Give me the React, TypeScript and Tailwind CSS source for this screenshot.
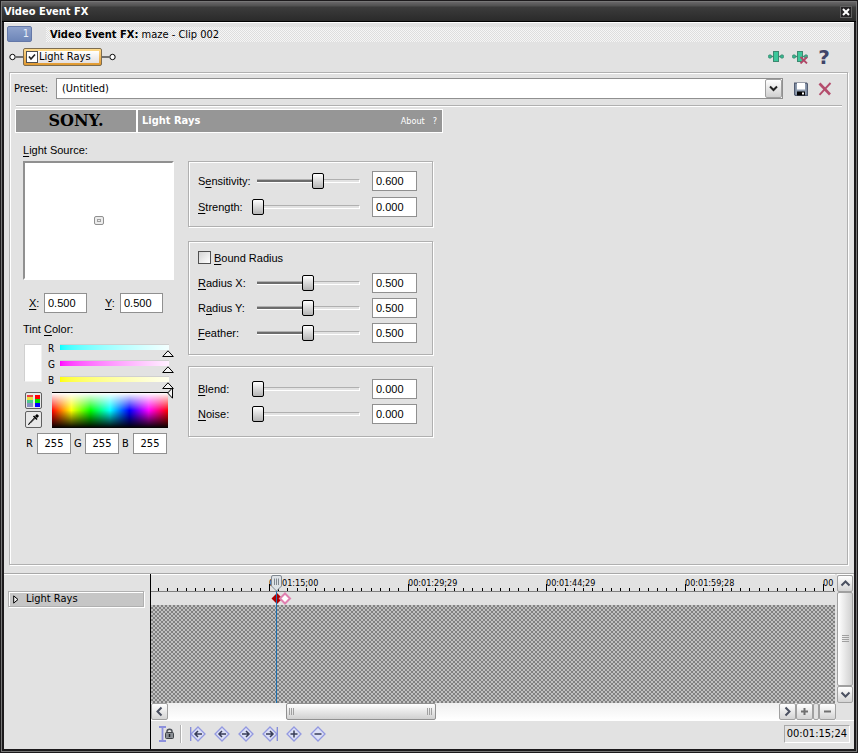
import React, { useState } from "react";

const etched =
  "border border-[#b0b0b0] shadow-[inset_1px_1px_0_#fff,1px_1px_0_#fff]";
const field =
  "h-5 border border-[#909090] bg-white px-[3px] text-black outline-none";
const arial =
  "font-['Liberation_Sans',Arial,sans-serif] text-[11px] leading-4";
const scrollButton =
  "flex size-[17px] shrink-0 items-center justify-center rounded-[2px] border border-[#a0a0a0] bg-linear-to-b from-white to-[#d4d4d4] text-[#4a5060]";

function Key({ text }: { text: string }) {
  const [before, key, after] = text.split("_");
  return (
    <>
      {before}
      <span className="underline underline-offset-2">{key}</span>
      {after}
    </>
  );
}

function Chevron({ d }: { d: string }) {
  return (
    <svg width="11" height="11" viewBox="0 0 11 11" fill="none" stroke="currentColor" strokeWidth="2">
      <path d={d} />
    </svg>
  );
}

function SliderRow({ id, label, initial }: { id: string; label: string; initial: number }) {
  const [value, setValue] = useState(initial);
  return (
    <div className="flex h-5 items-center">
      <label htmlFor={id} className="w-[54px] shrink-0 whitespace-nowrap">
        <Key text={label} />
      </label>
      <div className="grid w-28 items-center">
        <div className="col-start-1 row-start-1 mr-1 ml-[5px] h-1 border-t border-r border-b border-t-[#b0b0b0] border-r-white border-b-white bg-[#e2e2e2]">
          <div className="h-[2px] bg-[#6c6c6c]" style={{ width: `${value * 100}%` }} />
        </div>
        <input
          id={id}
          type="range"
          min={0}
          max={1}
          step={0.001}
          value={value}
          onChange={(e) => setValue(Number(e.target.value))}
          className="col-start-1 row-start-1 h-4 w-28 appearance-none bg-transparent [&::-webkit-slider-thumb]:h-4 [&::-webkit-slider-thumb]:w-3 [&::-webkit-slider-thumb]:appearance-none [&::-webkit-slider-thumb]:rounded-[2px] [&::-webkit-slider-thumb]:border [&::-webkit-slider-thumb]:border-black [&::-webkit-slider-thumb]:bg-linear-to-b [&::-webkit-slider-thumb]:from-white [&::-webkit-slider-thumb]:to-[#b4b4b4]"
        />
      </div>
      <input
        aria-label={label.split("_").join("")}
        value={value.toFixed(3)}
        onChange={(e) => setValue(Number(e.target.value) || 0)}
        className={`${field} ml-2 w-[45px]`}
      />
    </div>
  );
}

const ramps = [
  { name: "R", ramp: "bg-linear-to-r from-[#00ffff] to-[#f4ffff]" },
  { name: "G", ramp: "bg-linear-to-r from-[#ff00ff] to-[#fff0ff]" },
  { name: "B", ramp: "bg-linear-to-r from-[#ffff00] to-[#fffff0]" },
];

function TintRamp({ name, ramp }: { name: string; ramp: string }) {
  return (
    <div className="flex h-4 items-start">
      <label htmlFor={`tint-${name}`} className="w-3 text-[10px] leading-[10px]">
        {name}
      </label>
      <div className="relative">
        <input
          id={`tint-${name}`}
          type="range"
          min={0}
          max={255}
          defaultValue={255}
          className={`block h-[6px] w-[109px] appearance-none border-t border-[#d0d0d0] ${ramp} [&::-webkit-slider-thumb]:size-1 [&::-webkit-slider-thumb]:appearance-none`}
        />
        <svg className="absolute top-[6px] -right-[5px]" width="12" height="7" viewBox="0 0 12 7">
          <path d="M0.7 6.5L6 0.8L11.3 6.5Z" fill="#f4f4f4" stroke="#000" />
        </svg>
      </div>
    </div>
  );
}

function PlugIcon({ removed }: { removed?: boolean }) {
  return (
    <svg width="16" height="14" viewBox="0 0 16 14">
      <path d="M2 6.5H14" stroke="#4a8a78" strokeWidth="1.4" />
      <circle cx="2" cy="6.5" r="1.7" fill="#35b890" stroke="#3d8870" strokeWidth=".8" />
      <circle cx="14" cy="6.5" r="1.7" fill="#35b890" stroke="#3d8870" strokeWidth=".8" />
      <rect x="5.5" y="1.5" width="5" height="10" fill="#3cc79a" stroke="#3d8870" />
      {removed && <path d="M8.5 7L15 13.5M15 7L8.5 13.5" stroke="#b04868" strokeWidth="1.8" />}
    </svg>
  );
}

const keyframeButtons = [
  { name: "First keyframe", d: "M5 8H12M8 5L5 8L8 11", bar: "M0.7 1V15" },
  { name: "Previous keyframe", d: "M5 8H12M8 5L5 8L8 11" },
  { name: "Next keyframe", d: "M4 8H11M8 5L11 8L8 11" },
  { name: "Last keyframe", d: "M4 8H11M8 5L11 8L8 11", bar: "M15.3 1V15" },
  { name: "Create keyframe", d: "M4.5 8H11.5M8 4.5V11.5" },
  { name: "Delete keyframe", d: "M4.5 8H11.5" },
];

const rulerStart = 118;
const rulerStep = 138.6;
const times = ["00:01:15;00", "00:01:29;29", "00:01:44;29", "00:01:59;28", "00"];

function Ruler() {
  const ticks = Array.from({ length: 87 }, (_, i) => i - 12);
  return (
    <div className="relative h-[17px] overflow-hidden border-b border-[#808080] text-[9px] leading-3">
      <svg className="absolute inset-0" width="100%" height="16">
        {ticks.map((i) => (
          <rect
            key={i}
            x={Math.round(rulerStart + (i * rulerStep) / 15)}
            y={i % 15 === 0 ? 9 : 13}
            width="1"
            height="8"
            fill="#000"
          />
        ))}
      </svg>
      {times.map((t, i) => (
        <span key={t} className="absolute top-[2px]" style={{ left: Math.round(rulerStart + i * rulerStep) }}>
          {t}
        </span>
      ))}
    </div>
  );
}

function Grip() {
  return <span className="h-[7px] w-[6px] bg-[repeating-linear-gradient(90deg,#a0a0a0_0_1px,transparent_1px_2px)]" />;
}

export default function App() {
  return (
    <div className="flex h-screen min-h-[640px] flex-col border border-[#1c1a1c] bg-[#1c1a1c] font-['DejaVu_Sans_Condensed','Noto_Sans',sans-serif] text-[11px] leading-4 text-black">
      <div className="flex min-h-0 flex-1 flex-col border border-[#777]">
        <header className="flex h-5 shrink-0 items-center justify-between bg-[linear-gradient(#686668_0,#505050_4px,#3c3c3c_5px,#2a2a2a_19px,#000_19px)] pr-1 pl-[2px]">
          <h1 className="font-bold text-white">Video Event FX</h1>
          <button aria-label="Close" className="flex size-3 items-center justify-center border border-[#606060] bg-[#242224]">
            <svg width="8" height="8" viewBox="0 0 8 8" stroke="#fff" strokeWidth="2">
              <path d="M1 1L7 7M7 1L1 7" />
            </svg>
          </button>
        </header>

        <div className="mx-[2px] mb-[2px] flex min-h-0 flex-1 flex-col border-t border-white bg-[#e2e2e2]">
          <div className="flex h-[22px] shrink-0 items-center pr-1 pl-[3px]">
            <div className="h-4 w-[25px] rounded-[2px] border border-[#6478a8] bg-linear-to-b from-[#8ea2cc] to-[#6e86b8] pr-[2px] text-right leading-[14px] text-[#e8eef8]">
              1
            </div>
            <div className="ml-[14px] h-[15px] flex-1 bg-[repeating-conic-gradient(#dedede_0_25%,#f6f6f6_0_50%)] bg-[length:2px_2px] pl-1 leading-[15px]">
              <b>Video Event FX:</b> maze - Clip 002
            </div>
          </div>

          <div className="flex h-[27px] shrink-0 items-center pr-[22px] pb-[3px] pl-[5px]">
            <svg width="14" height="8" viewBox="0 0 14 8" fill="#fff" stroke="#000">
              <path d="M7 4H14" />
              <circle cx="3.5" cy="4" r="2.7" />
            </svg>
            <div className="rounded-[2px] border border-[#7c6c50] bg-linear-to-b from-[#ffdc8c] to-[#e0982c] p-[2px]">
              <div className="flex h-3 items-center bg-linear-to-b from-white to-[#e4e0e0] pr-2">
                <span className="grid place-items-center">
                  <input
                    id="plugin"
                    type="checkbox"
                    defaultChecked
                    className="peer col-start-1 row-start-1 size-3 appearance-none border border-[#505050] bg-white"
                  />
                  <svg className="pointer-events-none invisible col-start-1 row-start-1 peer-checked:visible" width="8" height="8" viewBox="0 0 8 8" fill="none" stroke="#222" strokeWidth="1.6">
                    <path d="M1 3.5L3 6L7 1.5" />
                  </svg>
                </span>
                <label htmlFor="plugin" className="pl-px">Light Rays</label>
              </div>
            </div>
            <svg width="14" height="8" viewBox="0 0 14 8" fill="#fff" stroke="#000">
              <path d="M0 4H7" />
              <circle cx="10.5" cy="4" r="2.7" />
            </svg>
            <div className="ml-auto flex items-center gap-2">
              <button aria-label="Plug-in chain"><PlugIcon /></button>
              <button aria-label="Remove plug-in"><PlugIcon removed /></button>
              <button aria-label="Help" className="w-4 font-['DejaVu_Sans',sans-serif] text-[20px] font-bold leading-5 text-[#404468]">?</button>
            </div>
          </div>

          <section className={`mr-[6px] ml-[5px] flex min-h-0 flex-1 flex-col ${etched}`}>
            <div className="mt-[5px] flex shrink-0 items-center pr-[15px] pl-1">
              <label htmlFor="preset" className="w-[42px]">Preset:</label>
              <div className="grid flex-1">
                <select id="preset" className="col-start-1 row-start-1 h-[21px] appearance-none border border-[#909090] bg-white pr-5 pl-[5px] outline-none">
                  <option>(Untitled)</option>
                </select>
                <span className="pointer-events-none col-start-1 row-start-1 mr-px flex h-[19px] w-[17px] items-center justify-center self-center justify-self-end rounded-[2px] border border-[#a0a0a0] bg-linear-to-b from-white to-[#d0d0d0] text-[#222]">
                  <Chevron d="M2 3.5L5.5 7L9 3.5" />
                </span>
              </div>
              <button aria-label="Save preset" className="ml-[11px]">
                <svg width="14" height="14" viewBox="0 0 14 14">
                  <path d="M.6 1.2H12.6L13.4 2V13.4H1.4L.6 12.6Z" fill="#8e9cb0" stroke="#505a70" strokeWidth="1.2" />
                  <rect x="3" y="1" width="8" height="6.5" fill="#fff" />
                  <rect x="3" y="9.5" width="8" height="4" fill="#000" />
                  <rect x="8" y="10.5" width="2" height="2" fill="#fff" />
                </svg>
              </button>
              <button aria-label="Delete preset" className="ml-[10px]">
                <svg width="14" height="14" viewBox="0 0 14 14" stroke="#b44c6c" fill="none">
                  <path d="M1.5 1.5L12 12.5" strokeWidth="2.6" />
                  <path d="M12.5 1L1.5 12.8" strokeWidth="1.9" />
                </svg>
              </button>
            </div>
            <hr className="mt-[6px] mr-[5px] ml-[6px] shrink-0 border-t border-[#b0b0b0] shadow-[0_1px_0_#fff]" />

            <div className="mt-[3px] ml-[5px] flex h-6 w-[428px] shrink-0 gap-[2px] border border-white bg-white text-white">
              <div className="flex w-[120px] items-center justify-center bg-[#969696] font-['DejaVu_Serif',serif] text-[16px] font-bold text-black">
                SONY.
              </div>
              <div className="flex flex-1 items-center bg-[#969696] pr-[5px] pl-1">
                <h2 className="font-bold">Light Rays</h2>
                <button className="ml-auto text-[9px]">About</button>
                <button aria-label="Plug-in help" className="ml-2 text-[9px]">?</button>
              </div>
            </div>

            <div className={`flex gap-[14px] pl-[13px] ${arial}`}>
              <div className="w-[151px] pt-[9px]">
                <div><Key text="_L_ight Source:" /></div>
                <div className="mt-[3px] flex h-[119px] items-center justify-center border-2 border-t-[#909090] border-r-white border-b-white border-l-[#909090] bg-white">
                  <span className="flex h-[9px] w-[10px] items-center justify-center rounded-[2px] border border-[#909090] bg-[#ececec]">
                    <span className="h-[3px] w-1 border border-[#a0a0a0]" />
                  </span>
                </div>
                <div className="mt-[13px] flex items-center pl-[6px]">
                  <label htmlFor="px" className="w-[15px]"><Key text="_X_:" /></label>
                  <input id="px" defaultValue="0.500" className={`${field} w-[43px]`} />
                  <label htmlFor="py" className="ml-[18px] w-[15px]"><Key text="_Y_:" /></label>
                  <input id="py" defaultValue="0.500" className={`${field} w-[43px]`} />
                </div>
                <div className="mt-2"><Key text="Tint _C_olor:" /></div>
                <div className="mt-[7px] flex font-['DejaVu_Sans_Condensed','Noto_Sans',sans-serif] text-[11px]">
                  <div className="ml-px h-[38px] w-[18px] border border-t-[#d0d0d0] border-r-[#f0f0f0] border-b-[#f0f0f0] border-l-[#d0d0d0] bg-white" />
                  <div className="ml-[6px]">
                    {ramps.map((r) => (
                      <TintRamp key={r.name} {...r} />
                    ))}
                  </div>
                </div>
                <div className="flex">
                  <div className="ml-[2px] flex flex-col gap-[2px]">
                    <button aria-label="Colour model" className="flex size-[17px] items-center justify-center rounded-[2px] border border-[#606060] bg-[#e8e8e8]">
                      <svg width="13" height="12" viewBox="0 0 13 12">
                        <path d="M0 0H6V3H0Z" fill="#f04040" />
                        <path d="M0 2H6V5H0Z" fill="#e8e040" />
                        <path d="M0 5H6V8H0Z" fill="#50c890" />
                        <path d="M0 8H6V12H0Z" fill="#8890c0" />
                        <path d="M8 0H13V4H8Z" fill="#f00" />
                        <path d="M8 4H13V8H8Z" fill="#00e000" />
                        <path d="M8 8H13V12H8Z" fill="#00f" />
                      </svg>
                    </button>
                    <button aria-label="Pick colour" className="flex size-[17px] items-center justify-center rounded-[2px] border border-[#606060] bg-[#e8e8e8]">
                      <svg width="13" height="13" viewBox="0 0 13 13" fill="none" stroke="#000">
                        <path d="M8.2 5.2L3 10.4L1.5 11.5L2.6 10L7.6 4.6" />
                        <path d="M9 4L11 2" strokeWidth="3" />
                        <path d="M6.5 3L10 6.5" strokeWidth="1.6" />
                      </svg>
                    </button>
                  </div>
                  <div className="relative ml-[10px] h-[36px] w-[116px] border-t border-black bg-[linear-gradient(#fff,transparent_50%,#000),linear-gradient(90deg,#f00,#ff0,#0f0,#0ff,#00f,#f0f,#f00)]">
                    <svg className="absolute -top-[6px] -right-[5px]" width="6" height="12" viewBox="0 0 6 12">
                      <path d="M5.5 .8V11.2L.7 6Z" fill="#f4f4f4" stroke="#000" />
                    </svg>
                  </div>
                </div>
                <div className="mt-[5px] flex items-center pl-[3px] font-['DejaVu_Sans_Condensed','Noto_Sans',sans-serif] text-[11px]">
                  {["R", "G", "B"].map((c) => (
                    <React.Fragment key={c}>
                      <label htmlFor={`value-${c}`} className="w-[11px]">{c}</label>
                      <input id={`value-${c}`} defaultValue="255" className="mr-[3px] h-[21px] w-[34px] border border-[#909090] bg-white text-center outline-none" />
                    </React.Fragment>
                  ))}
                </div>
              </div>

              <div className="flex w-[245px] flex-col pt-7">
                <div className={`flex flex-col gap-[6px] py-[9px] pl-[9px] ${etched}`}>
                  <SliderRow id="sensitivity" label="S_e_nsitivity:" initial={0.6} />
                  <SliderRow id="strength" label="_S_trength:" initial={0} />
                </div>
                <div className={`mt-[14px] flex flex-col gap-[5px] pt-[9px] pb-[11px] pl-[9px] ${etched}`}>
                  <div className="mb-1 flex h-[13px] items-center gap-[3px]">
                    <input id="bound" type="checkbox" className="size-[13px] appearance-none border border-[#505050] bg-linear-to-br from-[#d4d4d4] to-white checked:bg-[#505050]" />
                    <label htmlFor="bound"><Key text="_B_ound Radius" /></label>
                  </div>
                  <SliderRow id="rx" label="_R_adius X:" initial={0.5} />
                  <SliderRow id="ry" label="R_a_dius Y:" initial={0.5} />
                  <SliderRow id="feather" label="_F_eather:" initial={0.5} />
                </div>
                <div className={`mt-[11px] flex flex-col gap-[5px] py-3 pl-[9px] ${etched}`}>
                  <SliderRow id="blend" label="_B_lend:" initial={0} />
                  <SliderRow id="noise" label="_N_oise:" initial={0} />
                </div>
              </div>
            </div>
          </section>

          <section className="mt-2 flex h-[176px] shrink-0 border-t border-[#a8a8a8]">
            <aside className="w-[146px] border-t border-white">
              <button className={`mt-4 ml-1 flex h-4 w-[136px] items-center bg-[#c6c6c6] pl-1 text-left ${etched}`}>
                <svg width="6" height="9" viewBox="0 0 6 9" fill="#f0f0f0" stroke="#000">
                  <path d="M.7 .9V8.1L5 4.5Z" />
                </svg>
                <span className="ml-[7px]">Light Rays</span>
              </button>
            </aside>
            <div className="flex min-w-0 flex-1 flex-col border-l border-black">
              <div className="flex">
                <div className="min-w-0 flex-1 border-t border-white">
                  <div className="relative">
                    <Ruler />
                    <div className="h-[13px]" />
                    <div className="h-[98px] bg-[repeating-conic-gradient(#808080_0_25%,#c0c0c0_0_50%)] bg-[length:4px_4px]" />
                    <svg className="absolute top-[17px] left-[120px]" width="22" height="13" viewBox="0 0 22 13">
                      <path d="M6 1L11.5 6.5L6 12L.5 6.5Z" fill="#b00000" />
                      <path d="M14 1.5L19 6.5L14 11.5L9 6.5Z" fill="#fff" stroke="#e080b0" strokeWidth="2" />
                    </svg>
                    <div className="absolute top-4 bottom-0 left-[125px] w-px bg-[#1c70b0]" />
                    <svg className="absolute top-0 left-[120px]" width="11" height="17" viewBox="0 0 11 17" stroke="#808890">
                      <path d="M.5 2Q.5 .5 2 .5H9Q10.5 .5 10.5 2V11L5.5 16L.5 11Z" fill="#dde2e6" />
                      <path d="M3.5 3.5V10M5.5 3.5V10M7.5 3.5V10" />
                    </svg>
                  </div>
                </div>
                <div className="mr-px ml-[2px] flex w-4 flex-col border-t border-white">
                  <button aria-label="Scroll up" className={`${scrollButton} w-4`}><Chevron d="M1.5 7.5L5.5 3.5L9.5 7.5" /></button>
                  <div className="flex flex-1 items-center justify-center rounded-[2px] border border-[#a0a0a0] bg-linear-to-r from-white to-[#d0d0d0]">
                    <span className="h-[8px] w-[7px] bg-[repeating-linear-gradient(#a0a0a0_0_1px,transparent_1px_2px)]" />
                  </div>
                  <button aria-label="Scroll down" className={`${scrollButton} w-4`}><Chevron d="M1.5 3.5L5.5 7.5L9.5 3.5" /></button>
                </div>
              </div>
              <div className="mr-[18px] flex h-[17px] shrink-0 bg-linear-to-b from-[#f0f0f0] to-white">
                <button aria-label="Scroll left" className={scrollButton}><Chevron d="M7.5 1.5L3.5 5.5L7.5 9.5" /></button>
                <div className="flex flex-1 pl-[118px]">
                  <div className="flex w-[150px] items-center justify-between rounded-[2px] border border-[#909090] bg-linear-to-b from-white to-[#d0d0d0] px-[2px]">
                    <Grip />
                    <Grip />
                  </div>
                </div>
                <button aria-label="Scroll right" className={scrollButton}><Chevron d="M3.5 1.5L7.5 5.5L3.5 9.5" /></button>
                <button aria-label="Zoom in" className={scrollButton}>
                  <svg width="7" height="7" stroke="#707070" strokeWidth="2"><path d="M0 3.5H7M3.5 0V7" /></svg>
                </button>
                <span className="w-[6px] rounded-[2px] border border-[#a0a0a0] bg-[#e2e2e2]" />
                <button aria-label="Zoom out" className={scrollButton}>
                  <svg width="7" height="7" stroke="#707070" strokeWidth="2"><path d="M0 3.5H7" /></svg>
                </button>
              </div>
              <div className="flex flex-1 items-center border-t border-white pr-1 pb-[2px] pl-[7px]">
                <button aria-label="Lock to cursor">
                  <svg width="16" height="16" viewBox="0 0 16 16" fill="none">
                    <path d="M1 1H8M1 15H8M4.500 1V15" stroke="#8c90dc" strokeWidth="1.8" />
                    <path d="M9 7V5.500Q9 3.200 11.500 3.200T14 5.500V7" stroke="#50545c" strokeWidth="1.5" />
                    <rect x="7.500" y="6.500" width="8" height="6" rx="1" fill="#8a8e94" stroke="#404448" />
                    <path d="M11.500 8V11" stroke="#202428" strokeWidth="1.5" />
                  </svg>
                </button>
                <span className="mr-1 ml-[6px] h-[18px] w-[2px] border-r border-l border-l-[#b0b0b0] border-r-white" />
                {keyframeButtons.map((k) => (
                  <button key={k.name} aria-label={k.name} className="flex w-6 items-center justify-center">
                    <svg width="16" height="16" viewBox="0 0 16 16" fill="none">
                      <path d="M8 1L15 8L8 15L1 8Z" fill="#dce0f6" stroke="#9298e0" strokeWidth="1.3" />
                      {k.bar && <path d={k.bar} stroke="#8088d8" strokeWidth="1.3" />}
                      <path d={k.d} stroke="#383c58" strokeWidth="1.5" />
                    </svg>
                  </button>
                ))}
                <output className="ml-auto border border-t-[#a8a8a8] border-r-white border-b-white border-l-[#a8a8a8] px-[2px]">00:01:15;24</output>
              </div>
            </div>
          </section>
        </div>
      </div>
    </div>
  );
}
